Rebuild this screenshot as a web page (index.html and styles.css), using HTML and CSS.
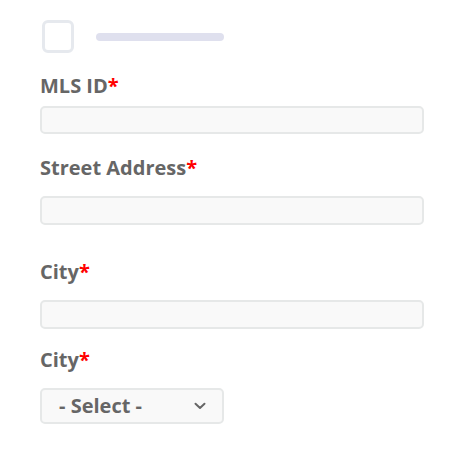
FILE: index.html
```html
<!DOCTYPE html>
<html>
<head>
<meta charset="utf-8">
<link rel="stylesheet" href="styles.css">
</head>
<body>
<div class="form">
  <div class="check-row">
    <div class="checkbox"></div>
    <div class="bar"></div>
  </div>
  <div class="field f1">
    <label class="label">MLS ID<span class="req">*</span></label>
    <div class="input"></div>
  </div>
  <div class="field f2">
    <label class="label">Street Address<span class="req">*</span></label>
    <div class="input"></div>
  </div>
  <div class="field f3">
    <label class="label">City<span class="req">*</span></label>
    <div class="input"></div>
  </div>
  <div class="field f4">
    <label class="label">City<span class="req">*</span></label>
    <div class="select">
      <span class="select-text">- Select -</span>
      <svg class="chev" width="12" height="8" viewBox="0 0 12 8"><path d="M1.5 1.8 L6 6 L10.5 1.8" fill="none" stroke="#666" stroke-width="2" stroke-linecap="round" stroke-linejoin="round"/></svg>
    </div>
  </div>
</div>
</body>
</html>
```
FILE: styles.css
```css
html, body {
  margin: 0;
  padding: 0;
  background: #fff;
}
body {
  font-family: "Open Sans", "Liberation Sans", sans-serif;
}
.form {
  padding: 20px 48px 0 40px;
}
.check-row {
  display: flex;
  align-items: center;
  height: 33px;
  padding-left: 2px;
}
.checkbox {
  width: 32px;
  height: 33px;
  box-sizing: border-box;
  border: 3px solid #e6e9ee;
  border-radius: 6px;
}
.bar {
  margin-left: 22px;
  width: 128px;
  height: 8px;
  border-radius: 4px;
  background: #dfe0ee;
}
.field {
  display: flex;
  flex-direction: column;
}
.label {
  font-size: 20px;
  line-height: 26px;
  font-weight: 700;
  color: #666;
  margin-bottom: 15px;
}
.f1 { margin-top: 20px; }
.f1 .label { margin-bottom: 7px; }
.f2 { margin-top: 21px; }
.f3 { margin-top: 34px; }
.f4 { margin-top: 18px; }
.req {
  color: #f00;
}
.input {
  height: 28px;
  box-sizing: border-box;
  border: 2px solid #e6e8e8;
  border-radius: 5px;
  background: #f9f9f9;
}
.f2 .input, .f3 .input { height: 29px; }
.select {
  width: 184px;
  height: 36px;
  box-sizing: border-box;
  border: 2px solid #e6e8e8;
  border-radius: 5px;
  background: #f9f9f9;
  display: flex;
  align-items: center;
  justify-content: space-between;
  padding: 0 16px 0 17px;
}
.select-text {
  font-size: 20px;
  font-weight: 700;
  color: #666;
  line-height: 24px;
}
.chev {
  display: block;
}
```
